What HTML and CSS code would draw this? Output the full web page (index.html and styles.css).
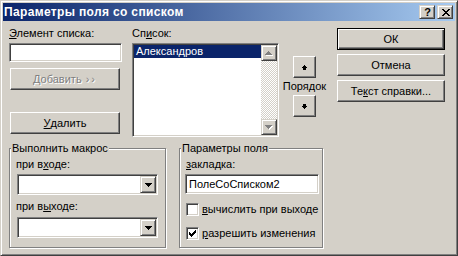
FILE: index.html
```html
<!DOCTYPE html>
<html lang="ru">
<head>
    <meta charset="UTF-8">
    <title>Параметры поля со списком</title>
    <link rel="stylesheet" href="styles.css">
</head>
<body>
    <div class="window">
        <div class="titlebar">
            <span class="title">Параметры поля со списком</span>
            <div class="caption-buttons">
                <div class="cap-btn help">?</div>
                <div class="cap-btn close">
                    <svg width="8" height="7" viewBox="0 0 8 7" shape-rendering="crispEdges">
                        <path d="M0 0h2v1h-2z M6 0h2v1h-2z M1 1h2v1h-2z M5 1h2v1h-2z M2 2h4v1h-4z M3 3h2v1h-2z M2 4h4v1h-4z M1 5h2v1h-2z M5 5h2v1h-2z M0 6h2v1h-2z M6 6h2v1h-2z" fill="#000"/>
                    </svg>
                </div>
            </div>
        </div>

        <div class="content">
            <div class="top-row">
                <div class="col-item">
                    <label class="lbl"><u>Э</u>лемент списка:</label>
                    <input type="text" class="edit item-edit">
                    <button class="btn add" disabled>Добавить <span class="chevrons">››</span></button>
                    <button class="btn remove"><u>У</u>далить</button>
                </div>

                <div class="col-list">
                    <label class="lbl">Сп<u>и</u>сок:</label>
                    <div class="listbox">
                        <div class="list-items">
                            <div class="list-item selected">Александров</div>
                        </div>
                        <div class="vscroll">
                            <div class="scroll-btn">
                                <svg width="8" height="5" viewBox="0 0 8 5" shape-rendering="crispEdges">
                                    <path d="M4 1h1v1h-1z M3 2h3v1h-3z M2 3h5v1h-5z M1 4h7v1h-7z" fill="#fff"/>
                                    <path d="M3 0h1v1h-1z M2 1h3v1h-3z M1 2h5v1h-5z M0 3h7v1h-7z" fill="#808080"/>
                                </svg>
                            </div>
                            <div class="scroll-track"></div>
                            <div class="scroll-btn">
                                <svg width="8" height="5" viewBox="0 0 8 5" shape-rendering="crispEdges">
                                    <path d="M1 1h7v1h-7z M2 2h5v1h-5z M3 3h3v1h-3z M4 4h1v1h-1z" fill="#fff"/>
                                    <path d="M0 0h7v1h-7z M1 1h5v1h-5z M2 2h3v1h-3z M3 3h1v1h-1z" fill="#808080"/>
                                </svg>
                            </div>
                        </div>
                    </div>
                </div>

                <div class="col-order">
                    <button class="btn order-btn">
                        <svg width="5" height="5" viewBox="0 0 5 5" shape-rendering="crispEdges">
                            <path d="M2 0h1v1h-1z M1 1h3v1h-3z M0 2h5v1h-5z M1 3h3v2h-3z" fill="#000"/>
                        </svg>
                    </button>
                    <span class="order-label">Порядок</span>
                    <button class="btn order-btn">
                        <svg width="5" height="5" viewBox="0 0 5 5" shape-rendering="crispEdges">
                            <path d="M1 0h3v2h-3z M0 2h5v1h-5z M1 3h3v1h-3z M2 4h1v1h-1z" fill="#000"/>
                        </svg>
                    </button>
                </div>

                <div class="col-actions">
                    <button class="btn default">ОК</button>
                    <button class="btn">Отмена</button>
                    <button class="btn">Те<u>к</u>ст справки...</button>
                </div>
            </div>

            <div class="bottom-row">
                <fieldset class="group macro-group">
                    <legend>Выполнить макрос</legend>
                    <label class="lbl">при в<u>х</u>оде:</label>
                    <div class="combo first-combo">
                        <div class="combo-value"></div>
                        <div class="combo-btn">
                            <svg width="7" height="4" viewBox="0 0 7 4" shape-rendering="crispEdges">
                                <path d="M0 0h7v1h-7z M1 1h5v1h-5z M2 2h3v1h-3z M3 3h1v1h-1z" fill="#000"/>
                            </svg>
                        </div>
                    </div>
                    <label class="lbl second-label">при в<u>ы</u>ходе:</label>
                    <div class="combo second-combo">
                        <div class="combo-value"></div>
                        <div class="combo-btn">
                            <svg width="7" height="4" viewBox="0 0 7 4" shape-rendering="crispEdges">
                                <path d="M0 0h7v1h-7z M1 1h5v1h-5z M2 2h3v1h-3z M3 3h1v1h-1z" fill="#000"/>
                            </svg>
                        </div>
                    </div>
                </fieldset>

                <fieldset class="group field-group">
                    <legend>Параметры поля</legend>
                    <label class="lbl"><u>з</u>акладка:</label>
                    <input type="text" class="edit bookmark-edit" value="ПолеСоСписком2">
                    <div class="check-row first-check">
                        <span class="checkbox"></span>
                        <span><u>в</u>ычислить при выходе</span>
                    </div>
                    <div class="check-row second-check">
                        <span class="checkbox">
                            <svg width="7" height="7" viewBox="0 0 7 7" shape-rendering="crispEdges">
                                <path d="M6 0h1v1h-1z M5 1h2v1h-2z M0 2h1v1h-1z M4 2h3v1h-3z M0 3h2v1h-2z M3 3h3v1h-3z M0 4h5v1h-5z M1 5h3v1h-3z M2 6h1v1h-1z" fill="#000"/>
                            </svg>
                        </span>
                        <span><u>р</u>азрешить изменения</span>
                    </div>
                </fieldset>
            </div>
        </div>
    </div>
</body>
</html>
```

FILE: styles.css
```css
* {
    box-sizing: border-box;
}

body {
    margin: 0;
    background-color: #d4d0c8;
    font-family: "Liberation Sans", Arial, sans-serif;
    font-size: 11px;
    line-height: 13px;
    color: #000;
}

u {
    text-decoration-thickness: 1px;
    text-underline-offset: 1px;
}

/* window frame */
.window {
    width: 458px;
    height: 256px;
    background-color: #d4d0c8;
    border: 1px solid;
    border-color: #d4d0c8 #404040 #404040 #d4d0c8;
    box-shadow: inset 1px 1px #fff, inset -1px -1px #808080;
    padding: 2px;
}

.titlebar {
    height: 18px;
    display: flex;
    align-items: center;
    justify-content: space-between;
    padding: 0 2px 0 1px;
    background: linear-gradient(to right, #0a246a, #a6caf0);
}

.title {
    color: #fff;
    font-weight: bold;
    font-size: 12px;
    letter-spacing: 0.35px;
}

.caption-buttons {
    display: flex;
    gap: 2px;
}

.cap-btn {
    width: 16px;
    height: 14px;
    display: flex;
    align-items: center;
    justify-content: center;
    background-color: #d4d0c8;
    border: 1px solid;
    border-color: #d4d0c8 #404040 #404040 #d4d0c8;
    box-shadow: inset 1px 1px #fff, inset -1px -1px #808080;
}

.cap-btn.help {
    font-weight: bold;
    font-size: 11px;
    line-height: 11px;
    padding-left: 1px;
}

.cap-btn.close svg {
    margin-left: 1px;
}

/* content */
.content {
    padding: 6px 0 0 6px;
}

.top-row {
    display: flex;
    align-items: flex-start;
    height: 115px;
}

.lbl {
    display: block;
    height: 13px;
    white-space: nowrap;
}

.edit {
    display: block;
    font: inherit;
    background-color: #fff;
    border: 1px solid;
    border-color: #808080 #fff #fff #808080;
    box-shadow: inset 1px 1px #404040, inset -1px -1px #d4d0c8;
    padding: 0 3px;
    outline: none;
}

.btn {
    display: flex;
    align-items: center;
    justify-content: center;
    font: inherit;
    color: #000;
    height: 22px;
    padding: 0;
    background-color: #d4d0c8;
    border: 1px solid;
    border-color: #fff #404040 #404040 #fff;
    box-shadow: inset -1px -1px #808080;
}

.btn:disabled {
    color: #808080;
    text-shadow: 1px 1px #fff;
}

.btn.default {
    border: 1px solid #000;
    box-shadow: inset 1px 1px #fff, inset -1px -1px #404040, inset -2px -2px #808080;
}

.chevrons {
    margin-left: 4px;
    letter-spacing: 2px;
}

/* column 1 */
.col-item {
    width: 113px;
    display: flex;
    flex-direction: column;
}

.item-edit {
    width: 113px;
    height: 19px;
    margin-top: 3px;
}

.col-item .btn {
    width: 110px;
    margin-left: 1px;
}

.btn.add {
    margin-top: 6px;
}

.btn.remove {
    margin-top: 22px;
}

/* list */
.col-list {
    margin-left: 10px;
    width: 147px;
}

.listbox {
    margin-top: 3px;
    height: 94px;
    display: flex;
    background-color: #fff;
    border: 1px solid;
    border-color: #808080 #fff #fff #808080;
    box-shadow: inset 1px 1px #404040, inset -1px -1px #d4d0c8;
    padding: 1px;
}

.list-items {
    flex: 1;
}

.list-item {
    height: 13px;
    padding-left: 2px;
    white-space: nowrap;
}

.list-item.selected {
    background-color: #0a246a;
    color: #fff;
}

.vscroll {
    width: 16px;
    display: flex;
    flex-direction: column;
}

.scroll-btn {
    width: 16px;
    height: 16px;
    display: flex;
    align-items: center;
    justify-content: center;
    background-color: #d4d0c8;
    border: 1px solid;
    border-color: #d4d0c8 #404040 #404040 #d4d0c8;
    box-shadow: inset 1px 1px #fff, inset -1px -1px #808080;
}

.scroll-track {
    flex: 1;
    background: repeating-conic-gradient(#d4d0c8 0 25%, #fff 0 50%) 0 0 / 2px 2px;
}

/* order buttons */
.col-order {
    width: 51px;
    padding-top: 29px;
    display: flex;
    flex-direction: column;
    align-items: center;
}

.order-btn {
    width: 23px;
}

.order-label {
    margin: 2px 0 2px;
}

/* dialog buttons */
.col-actions {
    margin-left: 7px;
    width: 108px;
    padding-top: 1px;
    display: flex;
    flex-direction: column;
    gap: 4px;
}

/* group boxes */
.bottom-row {
    display: flex;
    gap: 13px;
}

.group {
    margin: 0;
    min-width: 0;
    height: 106px;
    padding: 3px 6px 0 6px;
    border: 1px solid #808080;
    box-shadow: inset 1px 1px #fff, 1px 1px #fff;
}

.group legend {
    padding: 0 1px;
    margin-left: -5px;
    background-color: #d4d0c8;
}

.macro-group {
    width: 157px;
}

.field-group {
    width: 144px;
}

.combo {
    display: flex;
    width: 141px;
    height: 21px;
    margin-left: 1px;
    background-color: #fff;
    border: 1px solid;
    border-color: #808080 #fff #fff #808080;
    box-shadow: inset 1px 1px #404040, inset -1px -1px #d4d0c8;
    padding: 1px;
}

.first-combo {
    margin-top: 3px;
}

.second-label {
    margin-top: 5px;
}

.second-combo {
    margin-top: 4px;
}

.combo-value {
    flex: 1;
}

.combo-btn {
    width: 16px;
    display: flex;
    align-items: center;
    justify-content: center;
    background-color: #d4d0c8;
    border: 1px solid;
    border-color: #d4d0c8 #404040 #404040 #d4d0c8;
    box-shadow: inset 1px 1px #fff, inset -1px -1px #808080;
}

.bookmark-edit {
    width: 134px;
    height: 20px;
    margin: 3px 0 0 -1px;
}

.check-row {
    display: flex;
    align-items: center;
    gap: 3px;
    height: 13px;
    white-space: nowrap;
}

.first-check {
    margin-top: 9px;
}

.second-check {
    margin-top: 11px;
}

.checkbox {
    flex: none;
    width: 13px;
    height: 13px;
    display: flex;
    align-items: center;
    justify-content: center;
    background-color: #fff;
    border: 1px solid;
    border-color: #808080 #fff #fff #808080;
    box-shadow: inset 1px 1px #404040, inset -1px -1px #d4d0c8;
}
```
